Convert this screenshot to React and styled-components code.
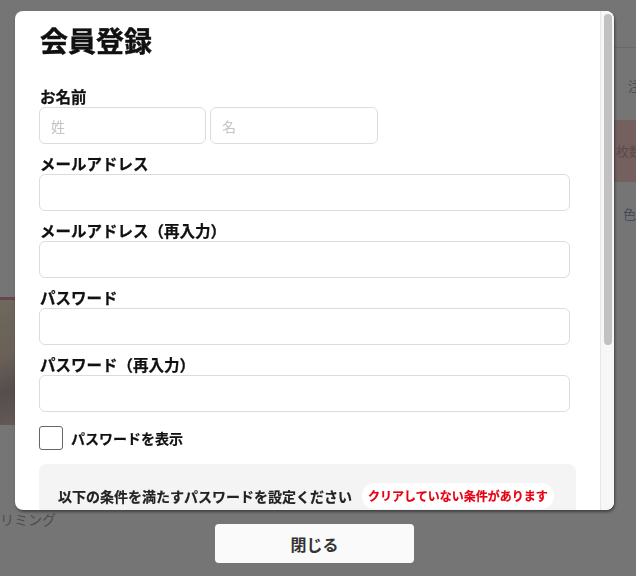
import styled, { createGlobalStyle } from 'styled-components';

const GlobalStyle = createGlobalStyle`
  * { box-sizing: border-box; }
  html, body { margin: 0; padding: 0; }
  body {
    font-family: "Noto Sans CJK JP", "Noto Sans", sans-serif;
    color: #111;
    background: #ffffff;
    overflow: hidden;
  }
`;

/* page behind the dialog */
const Page = styled.div`
  width: 636px;
  height: 576px;
  background: #ffffff;
  padding-top: 47px;
`;

const PageBody = styled.div`
  display: grid;
  grid-template-columns: 612px 1fr;
  overflow: hidden;
`;

const Gallery = styled.div`
  padding-top: 250px;
  margin-left: -14px;
`;

const Photo = styled.div`
  width: 150px;
  height: 128px;
  border-top: 3px solid #e89aa6;
  background: linear-gradient(160deg, #f1e4cf 0%, #e6d2c0 35%, #b9a9a6 55%, #d8c2bd 75%, #f0dcd0 100%);
`;

const Caption = styled.p`
  margin: 84px 0 0;
  font-size: 14px;
  color: #aaaaaa;
  white-space: nowrap;
`;

const Side = styled.div`
  display: flex;
  flex-direction: column;
  padding-top: 18px;
  border-top: 1px solid #e4e4e4;
  overflow: hidden;
`;

const SideText = styled.div`
  padding-left: ${p => p.$indent || 14}px;
  font-size: 13px;
  white-space: nowrap;
  color: ${p => p.$color || '#aaaaaa'};
  height: ${p => p.$h || 40}px;
  line-height: ${p => p.$h || 40}px;
  background: ${p => p.$bg || 'transparent'};
  margin-top: ${p => p.$mt || 0}px;
`;

/* overlay + dialog */
const Overlay = styled.div`
  position: fixed;
  inset: 0;
  background: rgba(0, 0, 0, 0.54);
  display: flex;
  flex-direction: column;
  align-items: center;
  padding: 11px 7px 0 0;
  gap: 14px;
`;

const Modal = styled.div`
  width: 599px;
  height: 499px;
  background: #ffffff;
  border-radius: 8px;
  overflow: hidden;
  box-shadow: 1px 2px 3px rgba(0, 0, 0, 0.45);
  flex-shrink: 0;
  display: flex;
`;

const Scroller = styled.div`
  flex: 1;
  min-width: 0;
  height: 100%;
  overflow: hidden;
  padding: 15px 24px 40px 24px;
`;

const Track = styled.div`
  width: 14px;
  flex-shrink: 0;
  background: #f7f7f7;
  border-left: 1px solid #e6e6e6;
  padding: 3px 2px 0 3px;
`;

const Thumb = styled.div`
  height: 331px;
  border-radius: 5px;
  background: #c1c1c1;
`;

const Title = styled.h1`
  margin: 0 0 32px;
  font-size: 28px;
  line-height: 28px;
  font-weight: 700;
  padding-left: 1px;
  -webkit-text-stroke: 0.4px #111;
`;

const Field = styled.div`
  display: flex;
  flex-direction: column;
  margin-bottom: 9px;
`;

const Label = styled.label`
  font-size: 15.5px;
  font-weight: 700;
  line-height: 20px;
  margin-bottom: 1px;
  padding-left: 1px;
  -webkit-text-stroke: 0.25px #111;
`;

const NameRow = styled.div`
  display: flex;
  gap: 4px;
`;

const Input = styled.input`
  width: ${p => p.$w || '531px'};
  height: 37px;
  border: 1px solid #dcdcdc;
  border-radius: 6px;
  padding: 0 11px;
  font-family: inherit;
  font-size: 14px;
  color: #333;
  background: #ffffff;
  outline: none;

  &::placeholder {
    color: #c4c4c4;
  }
`;

const CheckRow = styled.label`
  display: flex;
  align-items: center;
  gap: 8px;
  margin-top: 14px;
  font-size: 14px;
  font-weight: 700;
  -webkit-text-stroke: 0.2px #111;
`;

const Box = styled.span`
  width: 24px;
  height: 24px;
  border: 1px solid #666;
  border-radius: 3px;
  background: #fff;
`;

const Rules = styled.div`
  margin-top: 14px;
  background: #f4f4f4;
  border-radius: 8px;
  padding: 19px 19px 20px;
`;

const RulesHead = styled.div`
  display: flex;
  align-items: center;
  gap: 10px;
  font-size: 14px;
  font-weight: 700;
  color: #222;
  -webkit-text-stroke: 0.2px #222;
`;

const Pill = styled.span`
  background: #ffffff;
  color: #e60012;
  font-size: 12px;
  font-weight: 700;
  line-height: 26px;
  padding: 0 6px;
  border-radius: 13px;
  -webkit-text-stroke: 0.2px #e60012;
`;

const RuleList = styled.ul`
  list-style: none;
  margin: 16px 0 0;
  padding: 0;
  display: flex;
  flex-direction: column;
  gap: 10px;
  font-size: 13px;
  color: #444;
`;

const Submit = styled.button`
  display: block;
  margin: 24px auto 0;
  width: 260px;
  height: 44px;
  border: none;
  border-radius: 22px;
  background: #cccccc;
  color: #fff;
  font-family: inherit;
  font-size: 15px;
  font-weight: 700;
`;

const CloseButton = styled.button`
  width: 199px;
  height: 39px;
  border: none;
  border-radius: 4px;
  background: #fafafa;
  font-family: "Noto Sans CJK JP", sans-serif;
  font-size: 16px;
  font-weight: 700;
  color: #333;
  flex-shrink: 0;
`;

const fields = [
  'メールアドレス',
  'メールアドレス（再入力）',
  'パスワード',
  'パスワード（再入力）',
];

const rules = [
  '・8文字以上',
  '・半角英字を含む',
  '・半角数字を含む',
  '・記号は使用できません',
];

export default function App() {
  return (
    <>
      <GlobalStyle />
      <Page>
        <PageBody>
          <Gallery>
            <Photo />
            <Caption>トリミング</Caption>
          </Gallery>
          <Side>
            <SideText $indent={16}>注文内容</SideText>
            <SideText $bg="#ffd2d2" $color="#caa0a0" $h={62} $mt={14} $indent={4}>枚数</SideText>
            <SideText $color="#9aa6c8" $mt={12} $indent={11}>色選択</SideText>
          </Side>
        </PageBody>
      </Page>

      <Overlay>
        <Modal>
          <Scroller>
            <Title>会員登録</Title>
            <Field>
              <Label>お名前</Label>
              <NameRow>
                <Input $w="167px" placeholder="姓" />
                <Input $w="168px" placeholder="名" />
              </NameRow>
            </Field>
            {fields.map(f => (
              <Field key={f}>
                <Label>{f}</Label>
                <Input type={f.startsWith('パス') ? 'password' : 'email'} />
              </Field>
            ))}
            <CheckRow>
              <Box />
              パスワードを表示
            </CheckRow>
            <Rules>
              <RulesHead>
                以下の条件を満たすパスワードを設定ください
                <Pill>クリアしていない条件があります</Pill>
              </RulesHead>
              <RuleList>
                {rules.map(r => <li key={r}>{r}</li>)}
              </RuleList>
            </Rules>
            <Submit>登録する</Submit>
          </Scroller>
          <Track>
            <Thumb />
          </Track>
        </Modal>
        <CloseButton>閉じる</CloseButton>
      </Overlay>
    </>
  );
}
